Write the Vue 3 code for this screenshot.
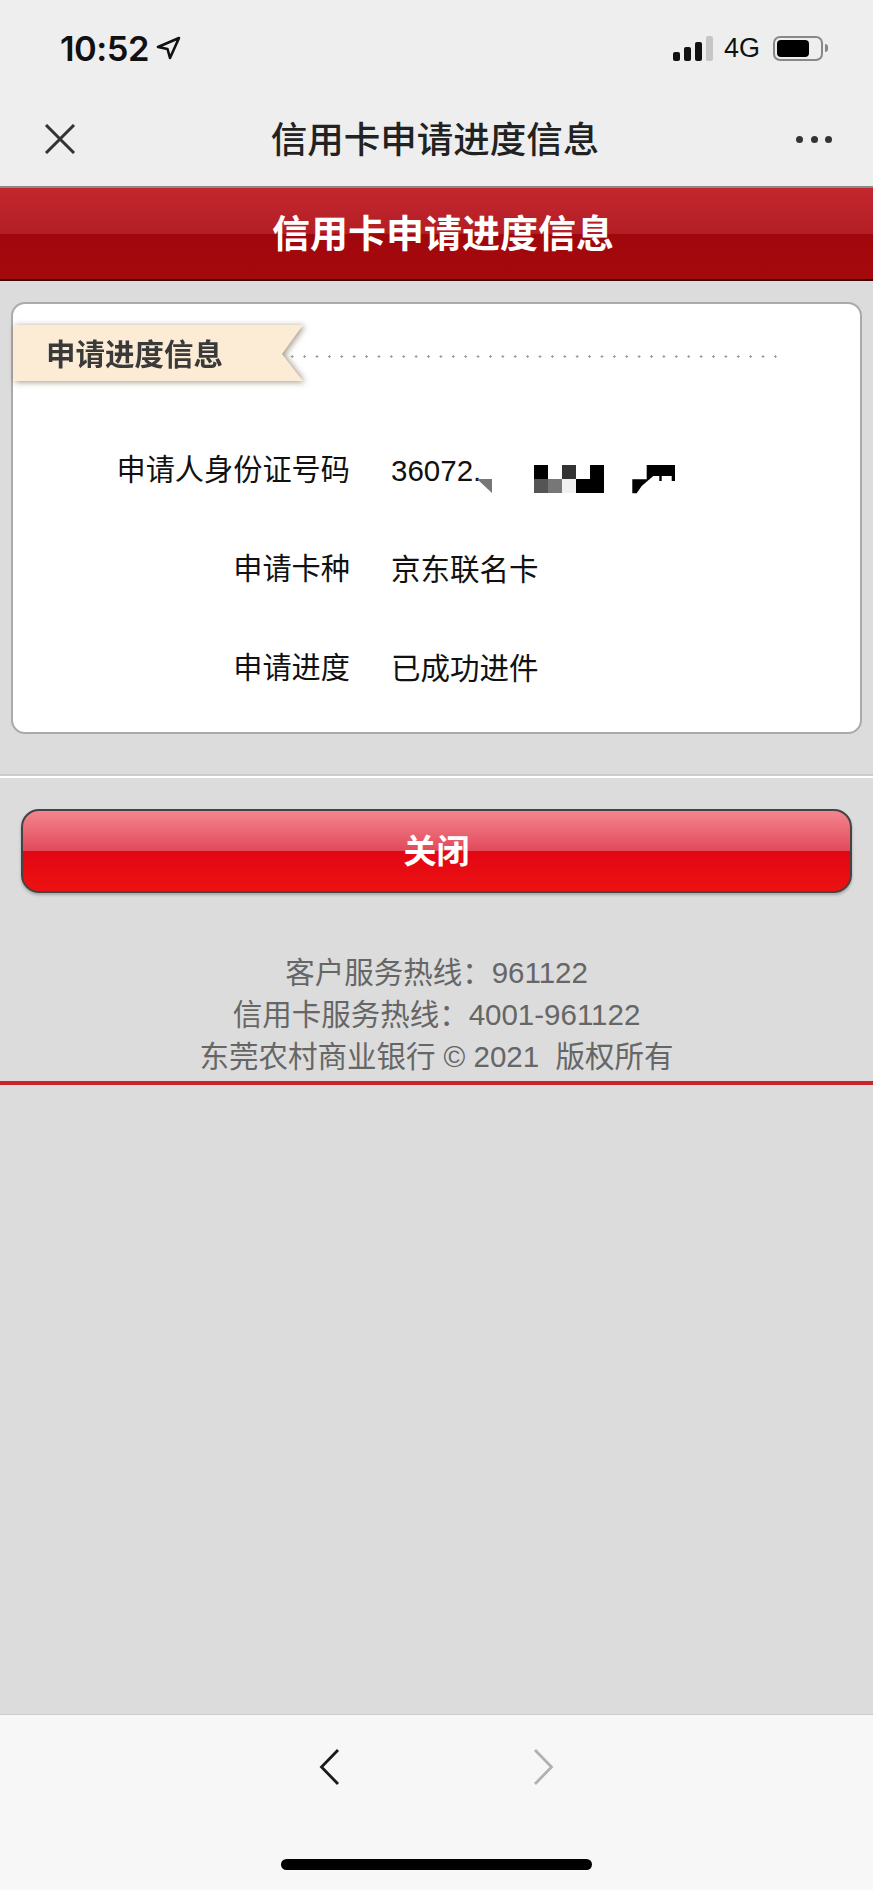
<script setup>
const rows = [
  { label: '申请人身份证号码', value: '36072.', masked: true },
  { label: '申请卡种', value: '京东联名卡' },
  { label: '申请进度', value: '已成功进件' }
]

const mosaic = [
  { x: 57, y: 0, fill: '#000' },
  { x: 85, y: 0, fill: '#333' },
  { x: 113, y: 0, fill: '#000' },
  { x: 57, y: 14, fill: '#555' },
  { x: 71, y: 14, fill: '#777' },
  { x: 85, y: 14, fill: '#f0f0f0' },
  { x: 99, y: 14, fill: '#000' },
  { x: 113, y: 14, fill: '#000' }
]

const hotlines = [
  '客户服务热线：961122',
  '信用卡服务热线：4001-961122',
  '东莞农村商业银行 © 2021  版权所有'
]
</script>

<template>
  <div class="page">
    <div class="top">
      <div class="status">
        <div class="status-left">
          <span class="time">10:52</span>
          <svg class="arrow" width="26" height="24" viewBox="0 0 26 24">
            <path d="M2 11 L23 2 L14 22 L11.500 13 Z" fill="none" stroke="#111" stroke-width="2.600" stroke-linejoin="round" />
          </svg>
        </div>
        <div class="status-right">
          <div class="signal">
            <i class="bar b1"></i>
            <i class="bar b2"></i>
            <i class="bar b3"></i>
            <i class="bar b4"></i>
          </div>
          <span class="net">4G</span>
          <div class="battery"><i class="level"></i></div>
          <i class="battery-cap"></i>
        </div>
      </div>
      <div class="nav">
        <svg class="close-icon" width="32" height="30" viewBox="0 0 32 30">
          <path d="M2 1 L30 29 M30 1 L2 29" stroke="#333" stroke-width="3" fill="none" />
        </svg>
        <div class="nav-title">信用卡申请进度信息</div>
        <div class="more">
          <i></i><i></i><i></i>
        </div>
      </div>
    </div>

    <div class="header">信用卡申请进度信息</div>

    <div class="main">
      <div class="card">
        <div class="card-head">
          <div class="ribbon-wrap">
            <div class="ribbon">申请进度信息</div>
          </div>
          <div class="dots"></div>
        </div>
        <div class="rows">
          <div v-for="row in rows" :key="row.label" class="row">
            <div class="label">{{ row.label }}</div>
            <div class="value">
              {{ row.value }}
              <svg v-if="row.masked" class="mask" width="198" height="29" viewBox="0 0 198 29">
                <polygon points="0,14 15,14 15,28" fill="#777" />
                <rect
                  v-for="cell in mosaic"
                  :key="`${cell.x}-${cell.y}`"
                  :x="cell.x"
                  :y="cell.y"
                  width="14"
                  height="14"
                  :fill="cell.fill"
                />
                <polygon
                  points="169.700,0 198,0 198,16 194.700,16 194.700,11 184.700,11 184.700,16 182.300,16 182.300,11 176.300,11 164.700,21 159.700,28.300 155.300,28.300 155.300,14.300 169.700,14.300"
                  fill="#000"
                />
              </svg>
            </div>
          </div>
        </div>
      </div>

      <div class="divider"></div>

      <div class="btn">关闭</div>

      <div class="footer">
        <div v-for="line in hotlines" :key="line" class="footer-line">{{ line }}</div>
      </div>
      <div class="red-line"></div>
    </div>

    <div class="bottom">
      <div class="arrows">
        <svg width="22" height="38" viewBox="0 0 22 38">
          <path d="M19 2 L2.500 19 L19 36" fill="none" stroke="#1a1a1a" stroke-width="2.800" />
        </svg>
        <svg width="22" height="38" viewBox="0 0 22 38">
          <path d="M3 2 L19.500 19 L3 36" fill="none" stroke="#b2b2b2" stroke-width="2.800" />
        </svg>
      </div>
      <div class="home"></div>
    </div>
  </div>
</template>

<style>
html, body {
  margin: 0;
  background: #dcdcdc;
}
</style>

<style scoped>
.page {
  display: flex;
  flex-direction: column;
  height: 1890px;
  font-family: "Liberation Sans", "Noto Sans CJK SC", sans-serif;
  background: #dcdcdc;
  overflow: hidden;
}
.top {
  height: 186px;
  background: #eeeeee;
}
.status {
  display: flex;
  justify-content: space-between;
  align-items: center;
  height: 96px;
  padding: 0 45px 0 60px;
}
.status-left {
  display: flex;
  align-items: center;
  gap: 7px;
}
.time {
  font-family: Inter, "Liberation Sans", sans-serif;
  font-size: 34.500px;
  font-weight: 600;
  color: #111;
  letter-spacing: -0.5px;
}
.status-right {
  display: flex;
  align-items: center;
}
.signal {
  display: flex;
  align-items: flex-end;
  gap: 4px;
  height: 25px;
  margin-right: 11px;
}
.bar {
  display: block;
  width: 7px;
  border-radius: 2px;
  background: #111;
}
.b1 { height: 9px; }
.b2 { height: 14px; }
.b3 { height: 19px; }
.b4 { height: 25px; background: #c6c6c6; }
.net {
  font-size: 27px;
  color: #111;
  margin-right: 13px;
}
.battery {
  display: flex;
  align-items: center;
  box-sizing: border-box;
  width: 50px;
  height: 25px;
  border: 2px solid #888;
  border-radius: 7px;
  padding: 0 2px;
}
.level {
  display: block;
  width: 32px;
  height: 17px;
  border-radius: 4px;
  background: #000;
}
.battery-cap {
  display: block;
  width: 3px;
  height: 8px;
  margin-left: 2px;
  border-radius: 0 3px 3px 0;
  background: #888;
}
.nav {
  display: flex;
  justify-content: space-between;
  align-items: center;
  height: 86px;
  padding: 0 41px 0 44px;
}
.nav-title {
  margin: 0 2px 3px 0;
  font-size: 36.500px;
  font-weight: 500;
  color: #222;
  text-align: center;
}
.more {
  display: flex;
  gap: 7.500px;
}
.more i {
  display: block;
  width: 7px;
  height: 7px;
  border-radius: 50%;
  background: #333;
}
.header {
  box-sizing: border-box;
  height: 95px;
  padding-left: 13px;
  line-height: 93px;
  border-top: 2px solid #8a8a8a;
  border-bottom: 2px solid #3a0406;
  background: linear-gradient(#c4272e 0, #b31e25 46px, #a0070c 46px, #a5090c 100%);
  color: #fff;
  font-size: 38px;
  font-weight: 700;
  text-align: center;
}
.main {
  flex: 1;
  padding-top: 21px;
}
.card {
  box-sizing: border-box;
  height: 432px;
  margin: 0 11px;
  padding-top: 21px;
  background: #fff;
  border: 2px solid #aaa;
  border-radius: 14px;
}
.card-head {
  display: flex;
  align-items: center;
}
.ribbon-wrap {
  filter: drop-shadow(2px 1px 3px rgba(80, 60, 30, 0.55));
}
.ribbon {
  box-sizing: border-box;
  width: 290px;
  height: 56px;
  padding-left: 33px;
  line-height: 60px;
  background: #fcecd6;
  clip-path: polygon(0 0, 100% 0, 269px 52%, 100% 100%, 0 100%);
  color: #3a3a3a;
  font-size: 29.500px;
  font-weight: 700;
}
.dots {
  width: 493px;
  height: 3px;
  margin: 6px 0 0 -17px;
  background: radial-gradient(circle, #999 1px, transparent 1.300px) 0 0 / 12.400px 3px repeat-x;
}
.rows {
  margin-top: 40px;
}
.row {
  display: flex;
  height: 99px;
  line-height: 99px;
  font-size: 29.500px;
  color: #111;
}
.label {
  width: 337px;
  font-size: 29.200px;
  text-align: right;
}
.value {
  position: relative;
  flex: 1;
  margin-left: 41px;
  white-space: nowrap;
}
.mask {
  position: absolute;
  left: 86px;
  top: calc(50% - 6px);
}
.divider {
  height: 2px;
  margin-top: 40px;
  background: #cccccc;
  border-bottom: 2px solid #fff;
}
.btn {
  box-sizing: border-box;
  height: 84px;
  margin: 31px 21px 0;
  line-height: 82px;
  border: 2px solid #444;
  border-radius: 18px;
  background: linear-gradient(#f4858f 0, #e04a5a 50%, #e20613 50%, #ec1212 100%);
  box-shadow: 0 2px 3px rgba(0, 0, 0, 0.25);
  color: #fff;
  font-size: 33px;
  font-weight: 700;
  text-align: center;
}
.footer {
  margin-top: 59px;
  color: #666;
  font-size: 29.500px;
  line-height: 42px;
  text-align: center;
}
.footer-line {
  white-space: pre;
}
.red-line {
  height: 4px;
  margin-top: 3px;
  background: #c8232c;
}
.bottom {
  box-sizing: border-box;
  height: 176px;
  padding-top: 33px;
  border-top: 1px solid #ccc;
  background: #f7f7f7;
}
.arrows {
  display: flex;
  gap: 191px;
  padding-left: 319px;
}
.arrows svg {
  display: block;
}
.home {
  width: 311px;
  height: 11px;
  margin: 73px 0 0 281px;
  border-radius: 6px;
  background: #000;
}
</style>
